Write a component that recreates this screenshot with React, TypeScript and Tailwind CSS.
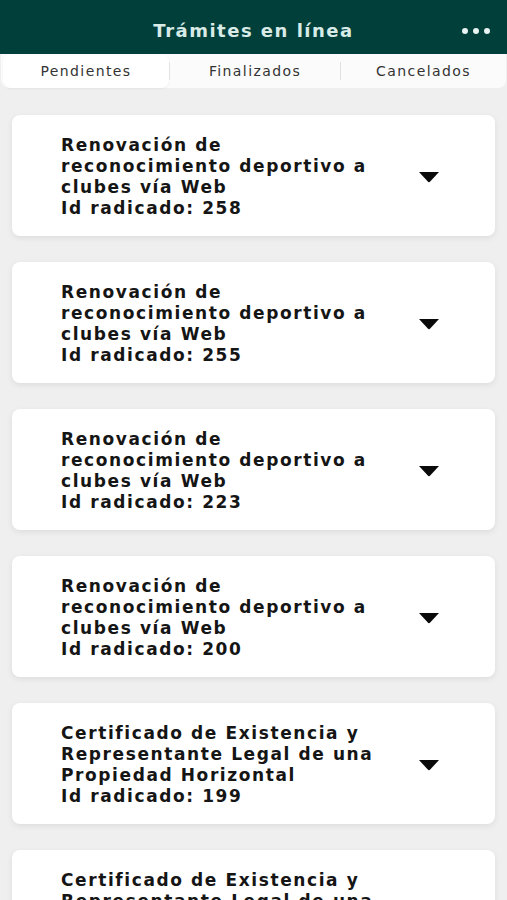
import React from "react";

const items = [
  { title: ["Renovación de", "reconocimiento deportivo a", "clubes vía Web"], id: "258" },
  { title: ["Renovación de", "reconocimiento deportivo a", "clubes vía Web"], id: "255" },
  { title: ["Renovación de", "reconocimiento deportivo a", "clubes vía Web"], id: "223" },
  { title: ["Renovación de", "reconocimiento deportivo a", "clubes vía Web"], id: "200" },
  { title: ["Certificado de Existencia y", "Representante Legal de una", "Propiedad Horizontal"], id: "199" },
  { title: ["Certificado de Existencia y", "Representante Legal de una", "Propiedad Horizontal"], id: "198" },
];

export default function App() {
  return (
    <div
      className="w-[507px] h-[900px] overflow-hidden bg-[#efefef] flex flex-col"
      style={{ fontFamily: '"DejaVu Sans", sans-serif' }}
    >
      <div className="h-[54px] shrink-0 bg-[#013f3b] flex items-center justify-center relative">
        <span className="text-[#d8ebe7] text-[18px] font-semibold tracking-[1.5px] mt-[6px]">
          Trámites en línea
        </span>
        <div className="absolute right-[17px] top-[28px] flex gap-[5px]">
          <span className="w-[6px] h-[6px] rounded-full bg-[#e8f4f2]" />
          <span className="w-[6px] h-[6px] rounded-full bg-[#e8f4f2]" />
          <span className="w-[6px] h-[6px] rounded-full bg-[#e8f4f2]" />
        </div>
      </div>
      <div className="h-[34px] shrink-0 mx-[1px] bg-[#fbfbfb] rounded-b-[8px] flex items-center text-[14px] text-[#333] tracking-[1.4px]">
        <div className="w-[166px] h-full bg-white rounded-[8px] flex items-center justify-center ml-[2px] shadow-[0_1px_2px_rgba(0,0,0,0.05)]">
          Pendientes
        </div>
        <div className="w-px h-[18px] bg-[#e2e2e2]" />
        <div className="w-[170px] flex items-center justify-center">Finalizados</div>
        <div className="w-px h-[18px] bg-[#e2e2e2]" />
        <div className="flex-1 flex items-center justify-center">Cancelados</div>
      </div>
      <div className="flex flex-col gap-[26px] px-[12px] pt-[27px]">
        {items.map((it, i) => (
          <div
            key={i}
            className="h-[121px] shrink-0 bg-white rounded-[8px] shadow-[0_2px_6px_rgba(0,0,0,0.08)] flex items-center pl-[49px] pr-[55px] pt-[3px]"
          >
            <div className="flex-1 text-[17px] font-bold leading-[21px] text-[#151515] tracking-[1.6px] whitespace-nowrap">
              {it.title.map((t, j) => (
                <div key={j}>{t}</div>
              ))}
              <div>Id radicado: {it.id}</div>
            </div>
            <svg width="22" height="12" viewBox="0 0 22 12" className="shrink-0">
              <path d="M1 1 H21 L12.2 10.6 Q11 11.8 9.8 10.6 Z" fill="#0a0a0a" />
            </svg>
          </div>
        ))}
      </div>
    </div>
  );
}
